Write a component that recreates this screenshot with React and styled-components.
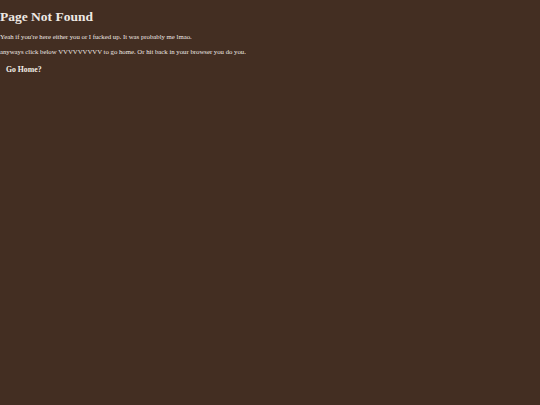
import React from 'react';
import styled, { createGlobalStyle } from 'styled-components';

const GlobalStyle = createGlobalStyle`
  html, body {
    margin: 0;
    padding: 0;
    background: #432e22;
    min-height: 100%;
  }
  body {
    font-family: "Liberation Serif", "Times New Roman", serif;
    color: #efe9e4;
  }
`;

const Page = styled.div`
  min-height: 405px;
  background: #432e22;
  padding-top: 9px;
`;

const Title = styled.h1`
  margin: 0 0 8px 0;
  font-size: 13.5px;
  font-weight: bold;
  line-height: 16px;
`;

const Text = styled.p`
  margin: 0 0 7px 0;
  font-size: 6.75px;
  line-height: 8px;
`;

const HomeLink = styled.a`
  display: block;
  width: max-content;
  margin: 9px 0 0 6px;
  font-size: 7.75px;
  line-height: 10px;
  font-weight: bold;
  color: #f4efe9;
  text-decoration: none;
  cursor: pointer;
`;

const App = () => {
  return (
    <Page>
      <GlobalStyle />
      <Title>Page Not Found</Title>
      <Text>Yeah if you're here either you or I fucked up. It was probably me lmao.</Text>
      <Text>anyways click below VVVVVVVVV to go home. Or hit back in your browser you do you.</Text>
      <HomeLink href="#">Go Home?</HomeLink>
    </Page>
  );
};

export default App;
